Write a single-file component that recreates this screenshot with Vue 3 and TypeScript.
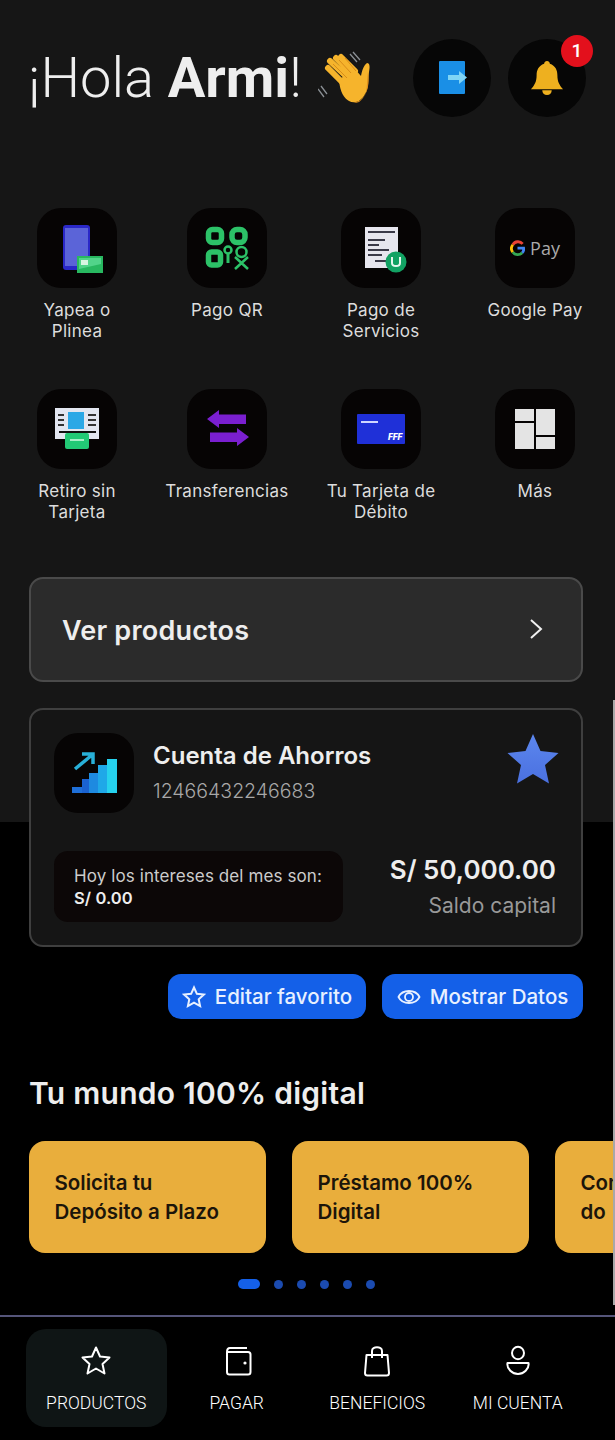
<template>
  <div class="page">
    <header class="top">
      <h1 class="hello">¡Hola <b>Armi</b>!</h1>
      <svg class="wave" viewBox="8 8 54 56">
        <path d="M40 12l7 8M43 10l7 8M11 44l6 8M8 47l6 8" fill="none" stroke="#8a8f94" stroke-width="1.300"/>
        <g fill="none" stroke="#f6b42c" stroke-width="6" stroke-linecap="round">
          <path d="M18 26 33 41M20 19 37 35M26 16 41 31M31 15 45 29"/>
        </g>
        <path d="M29 38 44 26 51 34C52 28 54 23 57 21 60 21 60 25 59 30 58 39 59 46 55 52 51 60 44 62 39 59 34 56 30 50 29 38Z" fill="#f6b42c"/>
        <path d="M44 60C50 60 54 56 56 50 57 45 57 38 58 30 59 38 59 46 55 53 51 60 47 62 44 60Z" fill="#e0901a"/>
        <path d="M23 22 37 36M29 18 41 31M35 16 46 29" fill="none" stroke="#d98c18" stroke-width="1"/>
      </svg>
      <div class="round first">
        <svg class="door" width="30" height="34" viewBox="0 0 30 34">
          <rect width="26" height="33" fill="#1a8fe6" rx="1"/>
          <path d="M9 14h11v-4l8 6.500-8 6.500v-4H9z" fill="#7fd4f5"/>
        </svg>
      </div>
      <div class="round bell">
        <svg width="34" height="36" viewBox="0 0 36 38">
          <path d="M18 1c2 0 3 1.500 3 3 6 2 8 7 8 12 0 7 2 10 6 15H1c4-5 6-8 6-15C7 11 9 6 15 4c0-1.500 1-3 3-3z" fill="#eeb01f"/>
          <path d="M13 32h10c0 3-2 5-5 5s-5-2-5-5z" fill="#eeb01f"/>
        </svg>
        <span class="badge">1</span>
      </div>
    </header>

    <section class="shortcuts">
      <div v-for="item in shortcuts" :key="item.id" class="shortcut">
        <div class="tile">
          <svg v-if="item.id === 'yape'" width="62" height="62" viewBox="0 0 62 62">
            <rect x="17" y="8" width="27" height="45" rx="3" fill="#2a28c8"/>
            <rect x="19" y="11" width="23" height="38" fill="#5b64d8"/>
            <rect x="31" y="39" width="26" height="17" fill="#28b860"/>
            <path d="M33 41h22v6l-22 5z" fill="#52d48a"/>
            <rect x="35" y="43" width="7" height="5" fill="#d8f5e2"/>
          </svg>
          <svg v-else-if="item.id === 'qr'" width="46" height="46" viewBox="0 0 46 46" fill="none" stroke="#2cc268" stroke-width="5.500">
            <rect x="4.500" y="4.500" width="13" height="13" rx="4"/>
            <rect x="28" y="4.500" width="13" height="13" rx="5"/>
            <rect x="4.500" y="27" width="12" height="13" rx="3"/>
            <circle cx="24" cy="25" r="3.500" stroke-width="2.500"/>
            <path d="M24 29v9" stroke-width="3"/>
            <circle cx="37.500" cy="27" r="5" stroke-width="2.500"/>
            <path d="M31 44 44 32M31 32l13 12" stroke-width="2.500"/>
          </svg>
          <svg v-else-if="item.id === 'bill'" width="56" height="56" viewBox="0 0 56 56">
            <rect x="12" y="7" width="33" height="41" fill="#e6e6ee"/>
            <path d="M15 12h27M15 20h17M15 25h11M15 30h21M15 35h14M22 41h14" stroke="#3a3a48" stroke-width="1.800"/>
            <circle cx="43" cy="42" r="10.500" fill="#12a263"/>
            <path d="M39 37v6c0 4 8 4 8 0v-6" fill="none" stroke="#e6f7ee" stroke-width="2"/>
          </svg>
          <div v-else-if="item.id === 'gpay'" class="gpay">
            <svg width="15" height="17" viewBox="0 0 16 17" fill="none" stroke-width="3">
              <path d="M13.500 3.500A6.500 6.500 0 0 0 3 4.500" stroke="#ea4335"/>
              <path d="M3 4.500a6.500 6.500 0 0 0 0 8" stroke="#fbbc05"/>
              <path d="M3 12.500a6.500 6.500 0 0 0 10 .5" stroke="#34a853"/>
              <path d="M13 13c1.500-1.300 1.800-3 1.500-5H8" stroke="#4285f4"/>
            </svg>
            <span>Pay</span>
          </div>
          <svg v-else-if="item.id === 'atm'" width="46" height="46" viewBox="0 0 46 46">
            <rect x="1" y="2" width="44" height="31" fill="#e2e6f0"/>
            <rect x="14" y="6" width="16" height="17" fill="#2ba8e6"/>
            <path d="M4 9h6M4 14h6M4 19h6M34 9h8M34 14h8M34 19h8" stroke="#333" stroke-width="2"/>
            <rect x="5" y="25" width="37" height="2" fill="#111"/>
            <rect x="11" y="27" width="24" height="16" rx="2" fill="#22c975"/>
            <rect x="16" y="33" width="14" height="2" fill="#a8efc8"/>
          </svg>
          <svg v-else-if="item.id === 'transfer'" width="44" height="40" viewBox="0 0 44 40" fill="#7a1fd0">
            <path d="M2 10 14 1v4.500h27V15H14v4z"/>
            <path d="M44 28 32 19v4.500H5V33h27v4z"/>
          </svg>
          <svg v-else-if="item.id === 'card'" width="48" height="30" viewBox="0 0 48 30">
            <rect width="48" height="30" rx="1" fill="#1f30d8"/>
            <rect x="4" y="7" width="17" height="2" fill="#cfd6ff"/>
            <text x="31" y="26" font-family="Roboto, sans-serif" font-size="9" font-weight="900" font-style="italic" fill="#fff">FFF</text>
          </svg>
          <div v-else class="blocks">
            <i class="b1"></i><i class="b2"></i><i class="b3"></i><i class="b4"></i>
          </div>
        </div>
        <p class="label">{{ item.first }}<br v-if="item.second" />{{ item.second }}</p>
      </div>
    </section>

    <button class="products">
      <span>Ver productos</span>
      <svg width="14" height="22" viewBox="0 0 14 22" fill="none" stroke="#f0f0f0" stroke-width="2">
        <path d="m2 2 10 9-10 9"/>
      </svg>
    </button>

    <section class="account">
      <div class="account-top">
        <div class="account-icon">
          <svg width="46" height="46" viewBox="0 0 46 46">
            <rect x="1" y="37" width="10" height="6" fill="#1e6fd8"/>
            <rect x="11" y="29" width="7" height="14" fill="#1a62d0"/>
            <rect x="18" y="23" width="9" height="20" fill="#1e8ae0"/>
            <rect x="27" y="15" width="9" height="28" fill="#1fa8e8"/>
            <rect x="36" y="9" width="10" height="34" fill="#26d2ee"/>
            <path d="M4 19 21 5M11 4h11v10" fill="none" stroke="#28b0d8" stroke-width="3.500"/>
          </svg>
        </div>
        <div class="account-name">
          <h2>Cuenta de Ahorros</h2>
          <p>12466432246683</p>
        </div>
        <svg class="fav" width="52" height="52" viewBox="0 0 52 52">
          <defs>
            <linearGradient id="star" x1="0" x2="0" y1="0" y2="1">
              <stop offset="0" stop-color="#5c87ee"/>
              <stop offset="1" stop-color="#4a70e0"/>
            </linearGradient>
          </defs>
          <path d="M26 1l7.500 17 18 2-13.500 12 4 18.500L26 41 10 50.500 14 32 .5 20l18-2z" fill="url(#star)"/>
        </svg>
      </div>
      <div class="account-bottom">
        <div class="interest">
          <p>Hoy los intereses del mes son:</p>
          <b>S/ 0.00</b>
        </div>
        <div class="balance">
          <strong>S/ 50,000.00</strong>
          <span>Saldo capital</span>
        </div>
      </div>
    </section>

    <div class="actions">
      <button class="action fav-btn">
        <svg width="24" height="24" viewBox="0 0 24 24" fill="none" stroke="#e8f0ff" stroke-width="2">
          <path d="m12 2.500 2.900 6.300 6.900.8-5.100 4.700 1.400 6.800-6.100-3.400-6.100 3.400 1.400-6.800-5.100-4.700 6.900-.8z"/>
        </svg>
        Editar favorito
      </button>
      <button class="action data-btn">
        <svg width="24" height="18" viewBox="0 0 24 18" fill="none" stroke="#e8f0ff" stroke-width="1.800">
          <path d="M1.500 9C4 4 8 3 12 3s8 1 10.500 6C20 14 16 15 12 15S4 14 1.500 9z"/>
          <circle cx="12" cy="9" r="4"/>
        </svg>
        Mostrar Datos
      </button>
    </div>

    <h2 class="world">Tu mundo 100% digital</h2>
    <div class="slides">
      <div v-for="slide in slides" :key="slide[0]" class="slide">
        <p>{{ slide[0] }}<br />{{ slide[1] }}</p>
      </div>
    </div>
    <div class="dots">
      <i class="pill"></i>
      <i v-for="n in 5" :key="n" class="dot"></i>
    </div>

    <nav class="nav">
      <div v-for="tab in tabs" :key="tab.id" class="tab" :class="{ active: tab.id === 'products' }">
        <svg width="34" height="34" viewBox="0 0 34 34" fill="none" stroke="#fff" stroke-width="2" stroke-linejoin="round">
          <path v-if="tab.id === 'products'" d="m17 3.500 4 9 9.500 1-7 6.500 2 9.500-8.500-5-8.500 5 2-9.500-7-6.500 9.500-1z"/>
          <template v-else-if="tab.id === 'pay'">
            <path d="M7 8c0-2.500 1-4 3-4h17M7 8v20c0 1.500 1 2.500 2.500 2.500H28c1.500 0 2.500-1 2.500-2.500V10.500C30.500 9 29.500 8 28 8z"/>
            <circle cx="25" cy="19" r="1.600" fill="#fff" stroke="none"/>
          </template>
          <template v-else-if="tab.id === 'benefits'">
            <path d="M6.500 11h21l1.500 18c0 1.500-1 2.500-2.500 2.500h-19C6 31.500 5 30.500 5 29z"/>
            <path d="M12 14V7c0-5 10-5 10 0v7"/>
          </template>
          <template v-else>
            <ellipse cx="17" cy="9" rx="6" ry="6.200"/>
            <path d="M6.500 19h21c1 6-5 11-10.500 11S5.500 25 6.500 19z"/>
          </template>
        </svg>
        <span>{{ tab.label }}</span>
      </div>
    </nav>
  </div>
</template>

<script setup lang="ts">
const shortcuts = [
  { id: 'yape', first: 'Yapea o', second: 'Plinea' },
  { id: 'qr', first: 'Pago QR', second: '' },
  { id: 'bill', first: 'Pago de', second: 'Servicios' },
  { id: 'gpay', first: 'Google Pay', second: '' },
  { id: 'atm', first: 'Retiro sin', second: 'Tarjeta' },
  { id: 'transfer', first: 'Transferencias', second: '' },
  { id: 'card', first: 'Tu Tarjeta de', second: 'Débito' },
  { id: 'more', first: 'Más', second: '' },
]

const slides = [
  ['Solicita tu', 'Depósito a Plazo'],
  ['Préstamo 100%', 'Digital'],
  ['Conoce', 'do'],
]

const tabs = [
  { id: 'products', label: 'PRODUCTOS' },
  { id: 'pay', label: 'PAGAR' },
  { id: 'benefits', label: 'BENEFICIOS' },
  { id: 'account', label: 'MI CUENTA' },
]
</script>

<style>
html,
body {
  margin: 0;
  background: #000;
}
</style>

<style scoped>
.page {
  position: relative;
  width: 615px;
  height: 1440px;
  overflow: hidden;
  background: linear-gradient(#161616 822px, #000 822px);
  color: #f2f2f2;
  font-family: Inter, "Liberation Sans", sans-serif;
}

/* scroll indicator on the right edge */
.page::after {
  content: "";
  position: absolute;
  top: 700px;
  right: 0;
  width: 2px;
  height: 605px;
  background: #a8a8a8;
}

.top {
  display: flex;
  align-items: center;
  height: 78px;
  padding: 39px 0 0 28px;
}

.hello {
  margin: 0;
  font: 300 56px Roboto, sans-serif;
  color: #eee;
  white-space: nowrap;
}

.hello b {
  font-weight: 700;
}

.wave {
  flex: none;
  width: 54px;
  height: 56px;
  margin-left: 16px;
}

.round {
  position: relative;
  flex: none;
  display: flex;
  align-items: center;
  justify-content: center;
  width: 78px;
  height: 78px;
  border-radius: 50%;
  background: #060606;
}

.first {
  margin-left: 41px;
}

.door {
  margin-left: 5px;
}

.bell {
  margin-left: 17px;
}

.badge {
  position: absolute;
  top: -4px;
  right: -7px;
  width: 32px;
  height: 32px;
  border-radius: 50%;
  background: #e3101c;
  color: #fff;
  font: 500 19px/32px Roboto, sans-serif;
  text-align: center;
}

.shortcuts {
  display: grid;
  grid-template-columns: 154px 146px 162px 146px;
  grid-auto-rows: 181px;
  margin-top: 91px;
}

.shortcut {
  display: flex;
  flex-direction: column;
  align-items: center;
}

.tile {
  display: flex;
  align-items: center;
  justify-content: center;
  width: 80px;
  height: 80px;
  border-radius: 24px;
  background: #060404;
}

.label {
  margin: 12px 0 0;
  font-size: 17px;
  line-height: 21px;
  letter-spacing: .3px;
  color: #ddd;
  text-align: center;
  white-space: nowrap;
}

.gpay {
  display: flex;
  align-items: center;
  gap: 5px;
  font: 400 18px "Open Sans", sans-serif;
  color: #aaa;
}

.blocks {
  display: grid;
  grid-template-columns: 19px 19px;
  grid-template-rows: 12px 12px 12px;
  gap: 2px;
  width: 40px;
  height: 40px;
}

.blocks i {
  background: #e4e4e4;
}

.b2 {
  grid-column: 2;
  grid-row: 1 / 3;
}

.b3 {
  grid-column: 1;
  grid-row: 2 / 4;
}

.b4 {
  grid-column: 2;
  grid-row: 3;
}

.products {
  display: flex;
  align-items: center;
  justify-content: space-between;
  box-sizing: border-box;
  width: 554px;
  height: 105px;
  margin: 7px 0 0 29px;
  padding: 0 38px 2px 31px;
  border: 2px solid #4a4a4a;
  border-radius: 14px;
  background: #2b2b2b;
  color: #eee;
  font: 600 27px Inter, sans-serif;
  letter-spacing: .2px;
}

.products span {
  margin-top: 3px;
}

.account {
  box-sizing: border-box;
  width: 554px;
  height: 239px;
  margin: 26px 0 0 29px;
  padding: 23px 22px 0 23px;
  border: 2px solid #3f3f3f;
  border-radius: 14px;
  background: #151515;
}

.account-top {
  display: flex;
  align-items: flex-start;
}

.account-icon {
  display: flex;
  align-items: center;
  justify-content: center;
  width: 80px;
  height: 80px;
  border-radius: 24px;
  background: #060404;
}

.account-name {
  flex: 1;
  margin-left: 19px;
}

.account-name h2 {
  margin: 8px 0 0;
  font-size: 24px;
  font-weight: 600;
  color: #eee;
}

.account-name p {
  margin: 9px 0 0;
  font-size: 19.500px;
  font-weight: 300;
  color: #a8a8a8;
}

.account-bottom {
  display: flex;
  justify-content: space-between;
  margin-top: 38px;
}

.interest {
  box-sizing: border-box;
  width: 289px;
  height: 71px;
  padding: 14px 20px;
  border-radius: 14px;
  background: #0c0707;
  font-size: 17px;
  line-height: 22px;
  letter-spacing: .1px;
  color: #ccc;
  white-space: nowrap;
}

.interest p {
  margin: 0;
}

.interest b {
  font-size: 16.500px;
  font-weight: 600;
  color: #eee;
}

.balance {
  display: flex;
  flex-direction: column;
  align-items: flex-end;
  margin-right: 3px;
  padding-top: 3px;
}

.balance strong {
  font-size: 26px;
  font-weight: 600;
  color: #eee;
}

.balance span {
  margin-top: 8px;
  font-size: 21px;
  color: #999;
}

.actions {
  display: flex;
  gap: 16px;
  margin: 27px 0 0 168px;
}

.action {
  display: flex;
  align-items: center;
  justify-content: center;
  gap: 9px;
  height: 45px;
  padding: 0;
  border: 0;
  border-radius: 13px;
  background: #1460e8;
  color: #e8f0ff;
  font: 500 20.500px Inter, sans-serif;
}

.fav-btn {
  width: 198px;
}

.data-btn {
  width: 201px;
}

.world {
  margin: 56px 0 0 29px;
  font-size: 30px;
  line-height: 36px;
  font-weight: 600;
  letter-spacing: .25px;
  color: #eee;
}

.slides {
  display: flex;
  gap: 26px;
  margin: 30px 2px 0 29px;
  overflow: hidden;
}

.slide {
  flex: 0 0 auto;
  box-sizing: border-box;
  width: 237px;
  height: 112px;
  padding: 27px 0 0 25.500px;
  border-radius: 16px;
  background: #e9ae3c;
  color: #1c150a;
  font-size: 20.500px;
  font-weight: 600;
  line-height: 29px;
}

.slide p {
  margin: 0;
}

.dots {
  display: flex;
  align-items: center;
  gap: 14px;
  height: 10px;
  margin: 26px 0 0 238px;
}

.pill {
  width: 22px;
  height: 10px;
  border-radius: 5px;
  background: #1460e8;
}

.dot {
  width: 9px;
  height: 9px;
  border-radius: 50%;
  background: #1b4bb0;
}

.nav {
  display: flex;
  box-sizing: border-box;
  height: 125px;
  margin-top: 26px;
  padding: 12px 0 0 26px;
  border-top: 2px solid #55557a;
}

.tab {
  display: flex;
  flex-direction: column;
  align-items: center;
  box-sizing: border-box;
  width: 140.500px;
  height: 98px;
  padding-top: 15px;
  border-radius: 20px;
  color: #fff;
  font: 300 17.500px Roboto, sans-serif;
}

.tab span {
  margin-top: 15px;
}

.active {
  background: #0f1515;
}
</style>
